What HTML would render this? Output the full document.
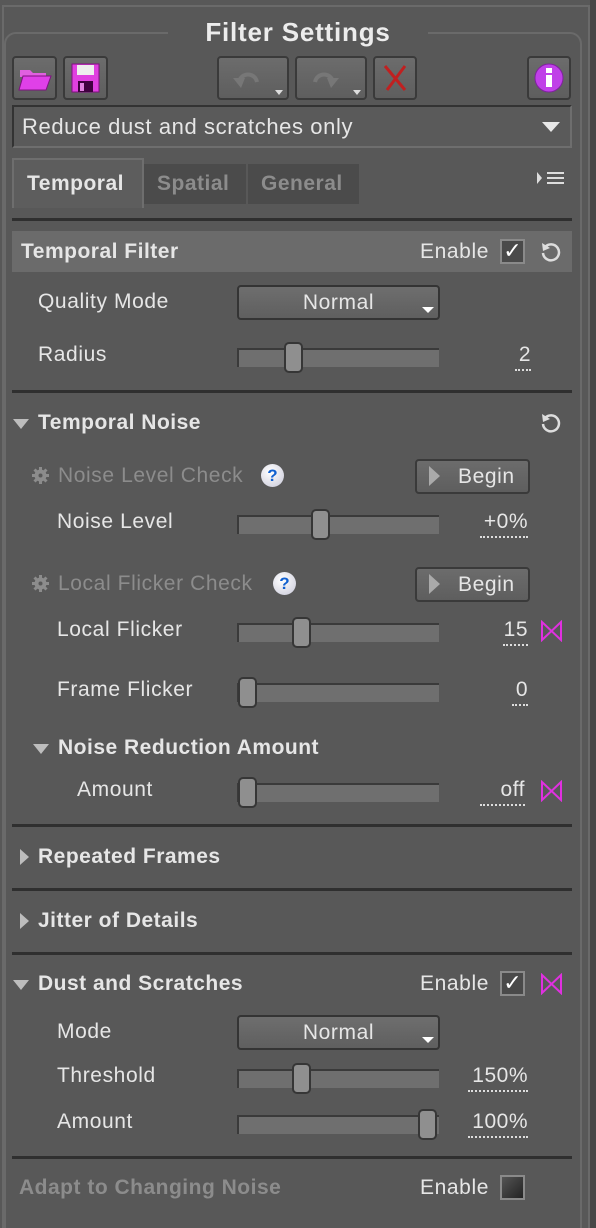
<!DOCTYPE html>
<html style="width:596px;height:1228px;overflow:hidden"><head><meta charset="utf-8"><style>
*{box-sizing:border-box;margin:0;padding:0}
body{width:596px;height:1228px;background:#585858;position:relative;overflow:hidden;font-family:"Liberation Sans",sans-serif;color:#e6e6e6}
.a{position:absolute}
.t{position:absolute;font-size:21px;line-height:24px;white-space:nowrap;letter-spacing:0.6px}
.b{font-weight:bold;letter-spacing:0.5px}
.g{color:#8c8c8c}
.line{position:absolute;left:12px;width:560px;height:3px;background:#2f2f2f}
.btn{position:absolute;background:linear-gradient(#6c6c6c,#5e5e5e);border:2px solid #3a3a3a;border-radius:4px}
.trk{position:absolute;left:237px;width:202px;height:19px;background:#6f6f6f;border-top:2px solid #3a3a3a;border-left:2px solid #3a3a3a}
.thumb{position:absolute;width:19px;height:31px;background:#8f8f8f;border:2px solid #363636;border-radius:5px}
.val{position:absolute;font-size:21px;line-height:24px;text-align:right;border-bottom:2px dotted #ddd;padding-bottom:2px;letter-spacing:0.5px}
.dd{position:absolute;left:237px;width:203px;height:35px;background:linear-gradient(#6e6e6e,#5f5f5f);border:2px solid #343434;border-radius:4px;text-align:center;font-size:21px;line-height:31px;letter-spacing:0.6px}
.dd:after{content:"";position:absolute;right:4px;bottom:5px;border-left:6px solid transparent;border-right:6px solid transparent;border-top:6px solid #fff}
.cb{position:absolute;width:25px;height:25px;border:2px solid #8a8a8a;background:#4a4a4a;color:#fff;font-size:22px;line-height:20px;text-align:center}
.tri{position:absolute;width:0;height:0;border-left:8px solid transparent;border-right:8px solid transparent;border-top:10px solid #bdbdbd}
.trir{position:absolute;width:0;height:0;border-top:8px solid transparent;border-bottom:8px solid transparent;border-left:9px solid #bdbdbd}
</style></head><body>
<div class="a" style="left:2px;top:5px;width:588px;height:1240px;border:2px solid #6a6a6a;border-bottom:none"></div>
<div class="a" style="left:590px;top:0;width:6px;height:1228px;background:#474747"></div>
<div class="a" style="left:4px;top:32px;width:578px;height:1220px;border:2px solid #6a6a6a;border-radius:12px"></div>
<div class="a" style="left:168px;top:14px;width:260px;height:30px;background:#585858"></div>
<div class="t b" style="left:0;width:596px;text-align:center;top:18px;font-size:26px;line-height:28px;color:#ececec;letter-spacing:0.8px">Filter Settings</div>

<div class="btn" style="left:12px;top:56px;width:45px;height:44px"><svg width="41" height="40"><path d="M6 12h10l3 3h13v4H6z" fill="#e060e0"/><path d="M5 32 9 18h28l-5 14z" fill="#e040e8" stroke="#801080"/></svg></div>
<div class="btn" style="left:63px;top:56px;width:45px;height:44px"><svg width="41" height="40"><rect x="7" y="6" width="27" height="28" fill="#e040e0" stroke="#801080"/><rect x="12" y="7" width="17" height="10" fill="#eee"/><rect x="13" y="23" width="15" height="11" fill="#400040"/><rect x="15" y="25" width="4" height="8" fill="#e080e0"/></svg></div>
<div class="btn" style="left:217px;top:56px;width:72px;height:44px"><svg width="68" height="40"><path d="M20 24c2-10 16-10 18 0" fill="none" stroke="#777" stroke-width="4"/><path d="M14 20l8 10 4-10z" fill="#777"/><path d="M56 32l8 0-4 5z" fill="#ddd"/></svg></div>
<div class="btn" style="left:295px;top:56px;width:72px;height:44px"><svg width="68" height="40"><path d="M18 24c2-10 16-10 18 0" fill="none" stroke="#777" stroke-width="4"/><path d="M42 20l-8 10-4-10z" fill="#777"/><path d="M56 32l8 0-4 5z" fill="#ddd"/></svg></div>
<div class="btn" style="left:373px;top:56px;width:44px;height:44px"><svg width="40" height="40"><path d="M10 8 30 32M30 8 12 32" stroke="#c02020" stroke-width="3"/></svg></div>
<div class="btn" style="left:527px;top:56px;width:44px;height:44px"><svg width="40" height="40"><circle cx="20" cy="20" r="14" fill="#c040e8" stroke="#8020a0"/><rect x="17" y="17" width="6" height="12" fill="#fff"/><rect x="17" y="10" width="6" height="5" fill="#fff"/></svg></div>

<div class="a" style="left:12px;top:105px;width:560px;height:43px;border:2px solid #6e6e6e;border-top-color:#333;border-left-color:#333;background:#5a5a5a"></div>
<div class="t" style="left:22px;top:115px;font-size:22px">Reduce dust and scratches only</div>
<div class="a" style="left:542px;top:122px;border-left:9px solid transparent;border-right:9px solid transparent;border-top:10px solid #e8e8e8"></div>

<div class="a" style="left:12px;top:158px;width:132px;height:50px;background:#5d5d5d;border:2px solid #6e6e6e;border-bottom:none"></div>
<div class="a" style="left:144px;top:164px;width:102px;height:40px;background:#4b4b4b"></div>
<div class="a" style="left:248px;top:164px;width:111px;height:40px;background:#4b4b4b"></div>
<div class="t b" style="left:27px;top:172px">Temporal</div>
<div class="t b g" style="left:157px;top:172px">Spatial</div>
<div class="t b g" style="left:261px;top:172px">General</div>
<div class="a" style="left:537px;top:172px;border-top:6px solid transparent;border-bottom:6px solid transparent;border-left:5px solid #ddd"></div>
<div class="a" style="left:547px;top:172px;width:17px;height:12px;border-top:2px solid #ddd;border-bottom:2px solid #ddd"></div>
<div class="a" style="left:547px;top:177px;width:17px;height:2px;background:#ddd"></div>
<div class="line" style="top:218px"></div>

<div class="a" style="left:12px;top:231px;width:560px;height:41px;background:#6b6b6b"></div>
<div class="t b" style="left:21px;top:240px">Temporal Filter</div>
<div class="t" style="left:420px;top:240px">Enable</div>
<div class="cb" style="left:500px;top:239px">✓</div>
<svg class="a" style="left:539px;top:240px" width="24" height="24"><path d="M6 7A8 8 0 1 1 4 13" fill="none" stroke="#ddd" stroke-width="2.5"/><path d="M3 3l1 8 7-3z" fill="#ddd"/></svg>

<div class="t" style="left:38px;top:290px">Quality Mode</div>
<div class="dd" style="top:285px">Normal</div>
<div class="t" style="left:38px;top:343px">Radius</div>
<div class="trk" style="top:348px"></div><div class="thumb" style="left:284px;top:342px"></div>
<div class="val" style="left:515px;width:16px;top:343px;">2</div>
<div class="line" style="top:390px"></div>

<div class="tri" style="left:13px;top:419px"></div>
<div class="t b" style="left:38px;top:411px">Temporal Noise</div>
<svg class="a" style="left:539px;top:411px" width="24" height="24"><path d="M6 7A8 8 0 1 1 4 13" fill="none" stroke="#ddd" stroke-width="2.5"/><path d="M3 3l1 8 7-3z" fill="#ddd"/></svg>

<svg class="a" style="left:31px;top:466px" width="19" height="19"><circle cx="9.5" cy="9.5" r="6" fill="#8c8c8c"/><path d="M9.5 1v17M1 9.5h17M3.5 3.5l12 12M15.5 3.5l-12 12" stroke="#8c8c8c" stroke-width="3"/><circle cx="9.5" cy="9.5" r="2" fill="#585858"/></svg>
<div class="t g" style="left:58px;top:464px">Noise Level Check</div>
<div class="a" style="left:261px;top:464px;width:23px;height:23px;border-radius:50%;background:radial-gradient(circle at 40% 35%,#fff,#c8c8d8);color:#1060d0;font-weight:bold;font-size:17px;line-height:23px;text-align:center">?</div>
<div class="btn" style="left:415px;top:459px;width:115px;height:35px"></div>
<div class="a" style="left:429px;top:466px;border-top:10px solid transparent;border-bottom:10px solid transparent;border-left:11px solid #aaa"></div>
<div class="t" style="left:458px;top:465px">Begin</div>

<div class="t" style="left:57px;top:510px">Noise Level</div>
<div class="trk" style="top:515px"></div><div class="thumb" style="left:311px;top:509px"></div>
<div class="val" style="left:480px;width:48px;top:510px">+0%</div>

<svg class="a" style="left:31px;top:574px" width="19" height="19"><circle cx="9.5" cy="9.5" r="6" fill="#8c8c8c"/><path d="M9.5 1v17M1 9.5h17M3.5 3.5l12 12M15.5 3.5l-12 12" stroke="#8c8c8c" stroke-width="3"/><circle cx="9.5" cy="9.5" r="2" fill="#585858"/></svg>
<div class="t g" style="left:58px;top:572px">Local Flicker Check</div>
<div class="a" style="left:273px;top:572px;width:23px;height:23px;border-radius:50%;background:radial-gradient(circle at 40% 35%,#fff,#c8c8d8);color:#1060d0;font-weight:bold;font-size:17px;line-height:23px;text-align:center">?</div>
<div class="btn" style="left:415px;top:567px;width:115px;height:35px"></div>
<div class="a" style="left:429px;top:574px;border-top:10px solid transparent;border-bottom:10px solid transparent;border-left:11px solid #aaa"></div>
<div class="t" style="left:458px;top:573px">Begin</div>

<div class="t" style="left:57px;top:618px">Local Flicker</div>
<div class="trk" style="top:623px"></div><div class="thumb" style="left:292px;top:617px"></div>
<div class="val" style="left:503px;width:25px;top:618px">15</div>
<svg class="a" style="left:540px;top:620px" width="23" height="22"><path d="M2 2v18L21 2v18z" fill="none" stroke="#e030e0" stroke-width="2"/></svg>

<div class="t" style="left:57px;top:678px">Frame Flicker</div>
<div class="trk" style="top:683px"></div><div class="thumb" style="left:238px;top:677px"></div>
<div class="val" style="left:512px;width:16px;top:678px">0</div>

<div class="tri" style="left:33px;top:744px"></div>
<div class="t b" style="left:58px;top:736px">Noise Reduction Amount</div>
<div class="t" style="left:77px;top:778px">Amount</div>
<div class="trk" style="top:783px"></div><div class="thumb" style="left:238px;top:777px"></div>
<div class="val" style="left:480px;width:45px;top:778px">off</div>
<svg class="a" style="left:540px;top:780px" width="23" height="22"><path d="M2 2v18L21 2v18z" fill="none" stroke="#e030e0" stroke-width="2"/></svg>
<div class="line" style="top:824px"></div>

<div class="trir" style="left:20px;top:849px"></div>
<div class="t b" style="left:38px;top:845px">Repeated Frames</div>
<div class="line" style="top:888px"></div>
<div class="trir" style="left:20px;top:913px"></div>
<div class="t b" style="left:38px;top:909px">Jitter of Details</div>
<div class="line" style="top:952px"></div>

<div class="tri" style="left:13px;top:980px"></div>
<div class="t b" style="left:38px;top:972px">Dust and Scratches</div>
<div class="t" style="left:420px;top:972px">Enable</div>
<div class="cb" style="left:500px;top:971px">✓</div>
<svg class="a" style="left:540px;top:973px" width="23" height="22"><path d="M2 2v18L21 2v18z" fill="none" stroke="#e030e0" stroke-width="2"/></svg>

<div class="t" style="left:57px;top:1020px">Mode</div>
<div class="dd" style="top:1015px">Normal</div>
<div class="t" style="left:57px;top:1064px">Threshold</div>
<div class="trk" style="top:1069px"></div><div class="thumb" style="left:292px;top:1063px"></div>
<div class="val" style="left:468px;width:60px;top:1064px">150%</div>
<div class="t" style="left:57px;top:1110px">Amount</div>
<div class="trk" style="top:1115px"></div><div class="thumb" style="left:418px;top:1109px"></div>
<div class="val" style="left:468px;width:60px;top:1110px">100%</div>
<div class="line" style="top:1156px"></div>

<div class="t b g" style="left:19px;top:1176px">Adapt to Changing Noise</div>
<div class="t" style="left:420px;top:1176px">Enable</div>
<div class="cb" style="left:500px;top:1175px;background:linear-gradient(135deg,#555,#222)"></div>
</body></html>
